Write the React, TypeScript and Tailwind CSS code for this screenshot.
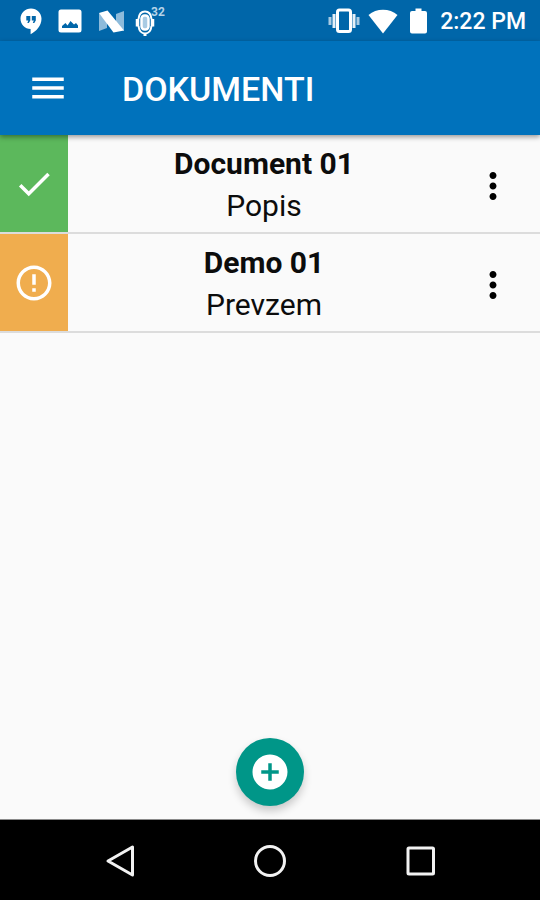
import React from "react";
import { MdAddCircle, MdCheck, MdErrorOutline, MdMenu, MdMoreVert } from "react-icons/md";

type Doc = { name: string; kind: string; done: boolean };

const docs: Doc[] = [
  { name: "Document 01", kind: "Popis", done: true },
  { name: "Demo 01", kind: "Prevzem", done: false },
];

function StatusBar() {
  return (
    <div className="flex h-[41px] items-center justify-between bg-[#0066a9] pl-5 pr-3.5 pt-px text-white">
      <div className="flex items-center gap-4">
        <svg width="22" height="27" viewBox="0 0 22 27" aria-hidden="true">
          <path fill="#fff" d="M11 0.5C5.2 0.5 0.5 5 0.5 10.8S5 21 10.6 21v5.2C16.2 23.5 21.5 17.8 21.5 10.8 21.5 5 16.8.5 11 .5z" />
          <path fill="#0066a9" d="M6.300 8h4v4.500L8.800 15H7.300l1-2.500h-2zM11.800 8h4v4.500L14.300 15h-1.500l1-2.500h-2z" />
        </svg>
        <svg width="24" height="24" viewBox="0 0 24 24" aria-hidden="true">
          <path fill="#fff" fillRule="evenodd" d="M3 .5h18A2.500 2.500 0 0 1 23.500 3v18a2.500 2.500 0 0 1-2.500 2.500H3A2.500 2.500 0 0 1 .5 21V3A2.500 2.500 0 0 1 3 .5zM4 19h16v-2.500l-2-2.500-2 1.500-3.500-3.500-3 4.500L7.500 14 4 17z" />
        </svg>
        <svg width="27" height="23" viewBox="0 0 27 23" aria-hidden="true">
          <path fill="#8dbbdb" d="M1 3l8 6v9l-8 3zM26 1v20l-8-6V4z" />
          <path fill="#fff" d="M1 3L9.500 .5 26 20.500 15.500 22.500z" />
        </svg>
        <div className="-ml-1.5 flex items-start">
          <svg className="mt-1" width="20" height="27" viewBox="0 0 20 27" fill="none" stroke="#fff" aria-hidden="true">
            <path strokeWidth="2" d="M3.500 9C4 4 6.500 1.500 10 1.500S16 4 16.500 9M3.500 16c.6 5 3 7.500 6.500 7.500s5.900-2.500 6.500-7.500" />
            <path strokeWidth="3.500" d="M2.500 9v7.500M17.500 9v7.500" />
            <rect x="6.500" y="5.500" width="7" height="14" rx="3" strokeWidth="2.500" fill="#a9cbe3" />
            <path strokeWidth="3" d="M10 23v3" />
          </svg>
          <span className="-ml-1 text-xs font-bold leading-3 text-[#b5d3e8]">32</span>
        </div>
      </div>
      <div className="flex items-center">
        <svg width="32" height="26" viewBox="0 0 32 26" aria-hidden="true">
          <rect x="9.500" y="2" width="13" height="21.500" rx="2" fill="none" stroke="#fff" strokeWidth="3" />
          <path stroke="#e6f0f7" strokeWidth="3" d="M6 6v14M26 6v14" />
          <path stroke="#a9cbe3" strokeWidth="3" d="M2 9v8M30 9v8" />
        </svg>
        <svg className="ml-2" width="30" height="25" viewBox="0 0 30 25" aria-hidden="true">
          <path fill="#fff" d="M15 24.500L.5 6C4.500 2.500 9.500.8 15 .8S25.500 2.500 29.500 6z" />
        </svg>
        <svg className="ml-3" width="17" height="26" viewBox="0 0 17 26" aria-hidden="true">
          <path fill="#fff" d="M5.500.5h6V3H15a2 2 0 0 1 2 2v18.500a2 2 0 0 1-2 2H2a2 2 0 0 1-2-2V5a2 2 0 0 1 2-2h3.500z" />
        </svg>
        <span className="ml-3 pl-px pt-0.5 text-[23px] font-medium leading-8">2:22 PM</span>
      </div>
    </div>
  );
}

function Row({ doc }: { doc: Doc }) {
  return (
    <li className="flex border-b-2 border-[#dcdcdc]">
      <div
        className={
          "flex w-[68px] shrink-0 items-center justify-center text-white " +
          (doc.done ? "bg-[#5cb85c]" : "bg-[#f0ad4e]")
        }
      >
        {doc.done ? <MdCheck size={42} /> : <MdErrorOutline size={42} />}
      </div>
      <div className="flex-1 pb-[5px] pt-2 text-center text-[30px] leading-[42px] text-[#0c0c0c]">
        <h2 className="font-bold">{doc.name}</h2>
        <p>{doc.kind}</p>
      </div>
      <button type="button" aria-label="Meni" className="flex w-20 items-center justify-center pr-3.5 pt-1 text-black">
        <MdMoreVert size={42} />
      </button>
    </li>
  );
}

export default function App() {
  return (
    <div className="flex min-h-screen flex-col bg-[#fafafa] font-[Roboto,sans-serif]">
      <StatusBar />
      <header className="relative flex h-[94px] items-center bg-[#0072bc] pl-[27px] text-white shadow-[0_2px_5px_rgba(0,0,0,0.4)]">
        <button type="button" aria-label="Odpri meni">
          <MdMenu size={42} />
        </button>
        <h1 className="ml-[53px] pt-px text-[34px] font-medium leading-10">DOKUMENTI</h1>
      </header>
      <main className="flex flex-1 flex-col">
        <ul>
          {docs.map((doc) => (
            <Row key={doc.name} doc={doc} />
          ))}
        </ul>
        <button
          type="button"
          aria-label="Dodaj"
          className="mx-auto mb-[13px] mt-auto flex size-17 items-center justify-center rounded-full bg-[#009688] text-white shadow-[0_5px_8px_rgba(0,0,0,0.2)]"
        >
          <MdAddCircle size={42} />
        </button>
      </main>
      <nav className="grid h-[81px] grid-cols-3 border-t border-[#8a8a8a] bg-black px-11 pt-px">
        <button type="button" aria-label="Nazaj" className="flex items-center justify-center">
          <svg width="34" height="34" viewBox="0 0 34 34" fill="none" stroke="#f2f2f2" strokeWidth="3" strokeLinejoin="round">
            <path d="M30.500 3v28L6 17z" />
          </svg>
        </button>
        <button type="button" aria-label="Domov" className="flex items-center justify-center">
          <svg width="34" height="34" viewBox="0 0 34 34" fill="none" stroke="#f2f2f2" strokeWidth="3">
            <circle cx="17" cy="17" r="14.500" />
          </svg>
        </button>
        <button type="button" aria-label="Nedavno" className="flex items-center justify-center">
          <svg width="34" height="34" viewBox="0 0 34 34" fill="none" stroke="#f2f2f2" strokeWidth="3" strokeLinejoin="round">
            <rect x="4" y="4" width="25.500" height="26" rx="1" />
          </svg>
        </button>
      </nav>
    </div>
  );
}
